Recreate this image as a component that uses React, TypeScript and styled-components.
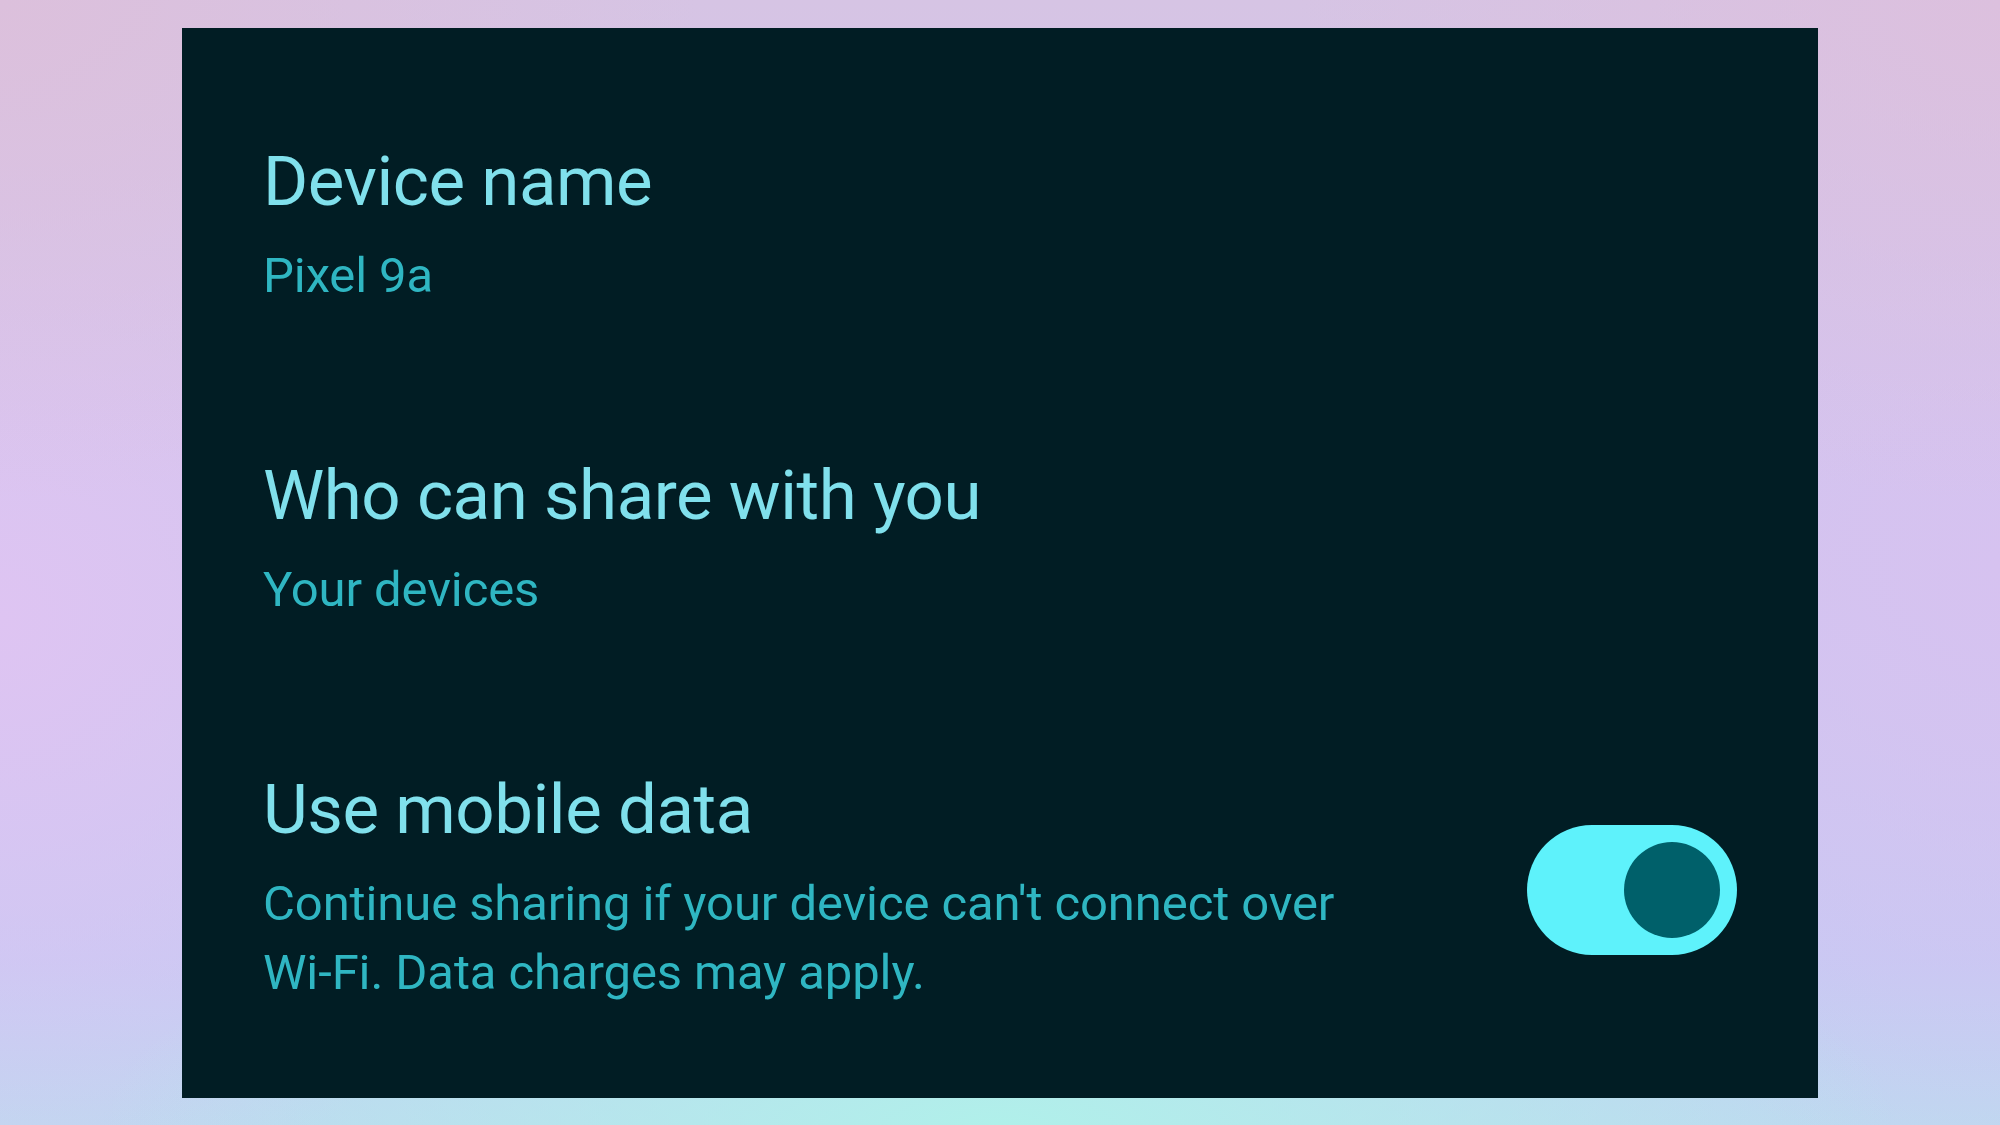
import React from "react";
import styled, { createGlobalStyle } from "styled-components";

const Global = createGlobalStyle`
  html, body { margin: 0; padding: 0; }
  body {
    width: 2000px;
    height: 1125px;
    overflow: hidden;
    font-family: Roboto, "Noto Sans", "Liberation Sans", sans-serif;
    background:
      radial-gradient(ellipse 900px 260px at 50% 100%, rgba(176, 240, 234, 1) 0%, rgba(176, 240, 234, 0.6) 40%, rgba(176, 240, 234, 0) 100%),
      radial-gradient(ellipse 700px 500px at 0% 0%, rgba(220, 192, 220, 1) 0%, rgba(220, 192, 220, 0) 100%),
      radial-gradient(ellipse 700px 500px at 100% 0%, rgba(220, 192, 222, 1) 0%, rgba(220, 192, 222, 0) 100%),
      radial-gradient(ellipse 600px 600px at 0% 55%, rgba(222, 196, 242, 1) 0%, rgba(222, 196, 242, 0) 100%),
      radial-gradient(ellipse 600px 600px at 100% 50%, rgba(214, 194, 240, 1) 0%, rgba(214, 194, 240, 0) 100%),
      linear-gradient(180deg, #d6c4e4 0%, #d0c6f0 55%, #c6caf4 85%, #bfd8f0 100%);
  }
`;

const Page = styled.div`
  width: 2000px;
  height: 1125px;
  display: flex;
  align-items: center;
  justify-content: center;
  box-sizing: border-box;
  padding-top: 1px;
`;

const Panel = styled.section`
  width: 1636px;
  height: 1070px;
  box-sizing: border-box;
  background: #011d24;
  padding: 113px 81px 0 81px;
  display: flex;
  flex-direction: column;
  gap: 145px;
`;

const Row = styled.div`
  display: flex;
  align-items: center;
  justify-content: space-between;
`;

const TextBlock = styled.div<{ $max?: number }>`
  display: flex;
  flex-direction: column;
  gap: 18px;
  max-width: ${(p) => (p.$max ? `${p.$max}px` : "none")};
`;

const Title = styled.div`
  font-size: 69px;
  line-height: 82px;
  font-weight: 400;
  color: #80e0ec;
  letter-spacing: -0.45px;
`;

const Subtitle = styled.div`
  font-size: 49px;
  line-height: 69px;
  font-weight: 400;
  color: #2fb6c2;
  letter-spacing: -0.1px;
`;

const Track = styled.div`
  width: 210px;
  height: 130px;
  border-radius: 65px;
  background: #5ef2fb;
  display: flex;
  align-items: center;
  justify-content: flex-end;
  padding-right: 17px;
  box-sizing: border-box;
  flex-shrink: 0;
  margin-top: 4px;
`;

const Thumb = styled.div`
  width: 96px;
  height: 96px;
  border-radius: 50%;
  background: #00606a;
`;

export default function App() {
  return (
    <>
      <Global />
      <Page>
        <Panel>
          <Row>
            <TextBlock>
              <Title>Device name</Title>
              <Subtitle>Pixel 9a</Subtitle>
            </TextBlock>
          </Row>
          <Row>
            <TextBlock>
              <Title>Who can share with you</Title>
              <Subtitle>Your devices</Subtitle>
            </TextBlock>
          </Row>
          <Row>
            <TextBlock $max={1130}>
              <Title>Use mobile data</Title>
              <Subtitle>
                Continue sharing if your device can't connect over Wi-Fi. Data charges may apply.
              </Subtitle>
            </TextBlock>
            <Track role="switch" aria-checked="true">
              <Thumb />
            </Track>
          </Row>
        </Panel>
      </Page>
    </>
  );
}
